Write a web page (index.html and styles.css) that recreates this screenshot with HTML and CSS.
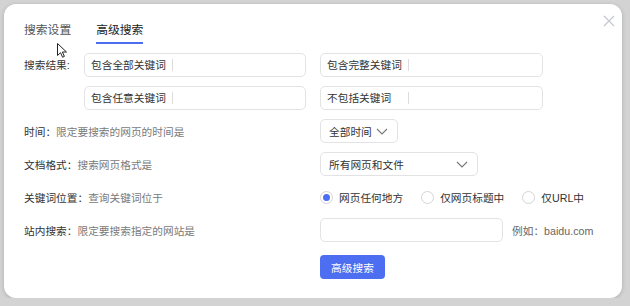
FILE: index.html
```html
<!DOCTYPE html>
<html lang="zh-CN">
<head>
    <meta charset="UTF-8">
    <meta name="viewport" content="width=device-width, initial-scale=1.0">
    <title>高级搜索</title>
    <link rel="stylesheet" href="styles.css">
</head>
<body>
    <div class="dialog">
        <span class="close">
            <svg width="12" height="12" viewBox="0 0 12 12"><path d="M1 1L11 11M11 1L1 11" stroke="#c4c7ce" stroke-width="1.2" fill="none"/></svg>
        </span>

        <div class="tabs">
            <span class="tab">搜索设置</span>
            <span class="tab active">高级搜索</span>
        </div>

        <div class="keywords">
            <div class="kw-label">搜索结果:</div>
            <div class="kw-grid">
                <div class="input"><span class="ph">包含全部关键词</span></div>
                <div class="input"><span class="ph">包含完整关键词</span></div>
                <div class="input"><span class="ph">包含任意关键词</span></div>
                <div class="input"><span class="ph">不包括关键词</span></div>
            </div>
        </div>

        <div class="row">
            <div class="label">时间：<span class="desc">限定要搜索的网页的时间是</span></div>
            <div class="select time">全部时间<svg class="chev" width="12" height="7" viewBox="0 0 12 7"><path d="M1 1L6 6L11 1" stroke="#777" stroke-width="1.1" fill="none"/></svg></div>
        </div>

        <div class="row">
            <div class="label">文档格式：<span class="desc">搜索网页格式是</span></div>
            <div class="select doc">所有网页和文件<svg class="chev" width="12" height="7" viewBox="0 0 12 7"><path d="M1 1L6 6L11 1" stroke="#777" stroke-width="1.1" fill="none"/></svg></div>
        </div>

        <div class="row">
            <div class="label">关键词位置：<span class="desc">查询关键词位于</span></div>
            <div class="radios">
                <span class="radio-item"><span class="radio checked"></span>网页任何地方</span>
                <span class="radio-item"><span class="radio"></span>仅网页标题中</span>
                <span class="radio-item"><span class="radio"></span>仅URL中</span>
            </div>
        </div>

        <div class="row">
            <div class="label">站内搜索：<span class="desc">限定要搜索指定的网站是</span></div>
            <div class="site-input"></div>
            <span class="hint">例如：baidu.com</span>
        </div>

        <div class="row submit">
            <div class="label"></div>
            <button class="btn">高级搜索</button>
        </div>

        <svg class="cursor" width="11" height="15" viewBox="0 0 11 15"><path d="M0.5 0.5V12.5L3.5 9.7L5.6 14.2L7.4 13.4L5.4 9H9.5Z" fill="#fff" stroke="#222" stroke-width="1" stroke-linejoin="round"/></svg>
    </div>
</body>
</html>
```

FILE: styles.css
```css
body {
    margin: 0;
    background-color: #d3d3d3;
    font-family: "Liberation Sans", "Noto Sans CJK SC", sans-serif;
    font-size: 10.7px;
    color: #333;
}
.dialog {
    position: relative;
    box-sizing: border-box;
    width: 618px;
    height: 294px;
    margin: 4px 0 0 4px;
    padding: 17px 20px 0 20px;
    background-color: #fff;
    border-radius: 12px;
    box-shadow: 0 1px 4px rgba(0, 0, 0, 0.18);
}
.close {
    position: absolute;
    top: 11px;
    right: 7px;
    width: 12px;
    height: 12px;
}
.close svg {
    display: block;
}
.cursor {
    position: absolute;
    left: 53px;
    top: 39px;
}
.tabs {
    display: flex;
    gap: 25px;
}
.tab {
    font-size: 11.8px;
    line-height: 18px;
    padding-bottom: 3px;
    border-bottom: 2px solid transparent;
    color: #555;
}
.tab.active {
    color: #222;
    border-bottom-color: #4e6ef2;
}
.keywords {
    display: flex;
    margin-top: 9px;
}
.kw-label {
    width: 60px;
    line-height: 24px;
    color: #333;
}
.kw-grid {
    display: grid;
    grid-template-columns: 222px 223px;
    column-gap: 14px;
    row-gap: 9px;
}
.input, .site-input, .select {
    box-sizing: border-box;
    height: 24px;
    border: 1px solid #e3e3e6;
    border-radius: 5px;
    background-color: #fff;
}
.input {
    display: flex;
    align-items: center;
    padding-left: 6px;
}
.ph {
    width: 81px;
    line-height: 12px;
    border-right: 1px solid #dcdcdc;
    color: #333;
}
.row {
    display: flex;
    align-items: center;
    height: 24px;
    margin-top: 9px;
}
.label {
    width: 296px;
    flex-shrink: 0;
    color: #333;
}
.desc {
    color: #7a7a7a;
}
.select {
    display: flex;
    align-items: center;
    justify-content: space-between;
    padding: 0 9px 0 8px;
    color: #333;
}
.select.time {
    width: 78px;
}
.select.doc {
    width: 158px;
}
.chev {
    display: block;
}
.radios {
    display: flex;
    gap: 18px;
}
.radio-item {
    display: flex;
    align-items: center;
    gap: 6px;
    color: #333;
}
.radio {
    box-sizing: border-box;
    width: 13px;
    height: 13px;
    border: 1px solid #d4d4d8;
    border-radius: 50%;
    display: flex;
    align-items: center;
    justify-content: center;
}
.radio.checked::after {
    content: "";
    width: 7px;
    height: 7px;
    border-radius: 50%;
    background-color: #4e6ef2;
}
.site-input {
    width: 183px;
}
.hint {
    margin-left: 9px;
    color: #666;
}
.submit {
    margin-top: 13px;
}
.btn {
    width: 65px;
    height: 24px;
    border: none;
    border-radius: 4px;
    background-color: #4e6ef2;
    color: #fff;
    font-family: "Liberation Sans", "Noto Sans CJK SC", sans-serif;
    font-size: 10.7px;
    padding: 0;
}
```
